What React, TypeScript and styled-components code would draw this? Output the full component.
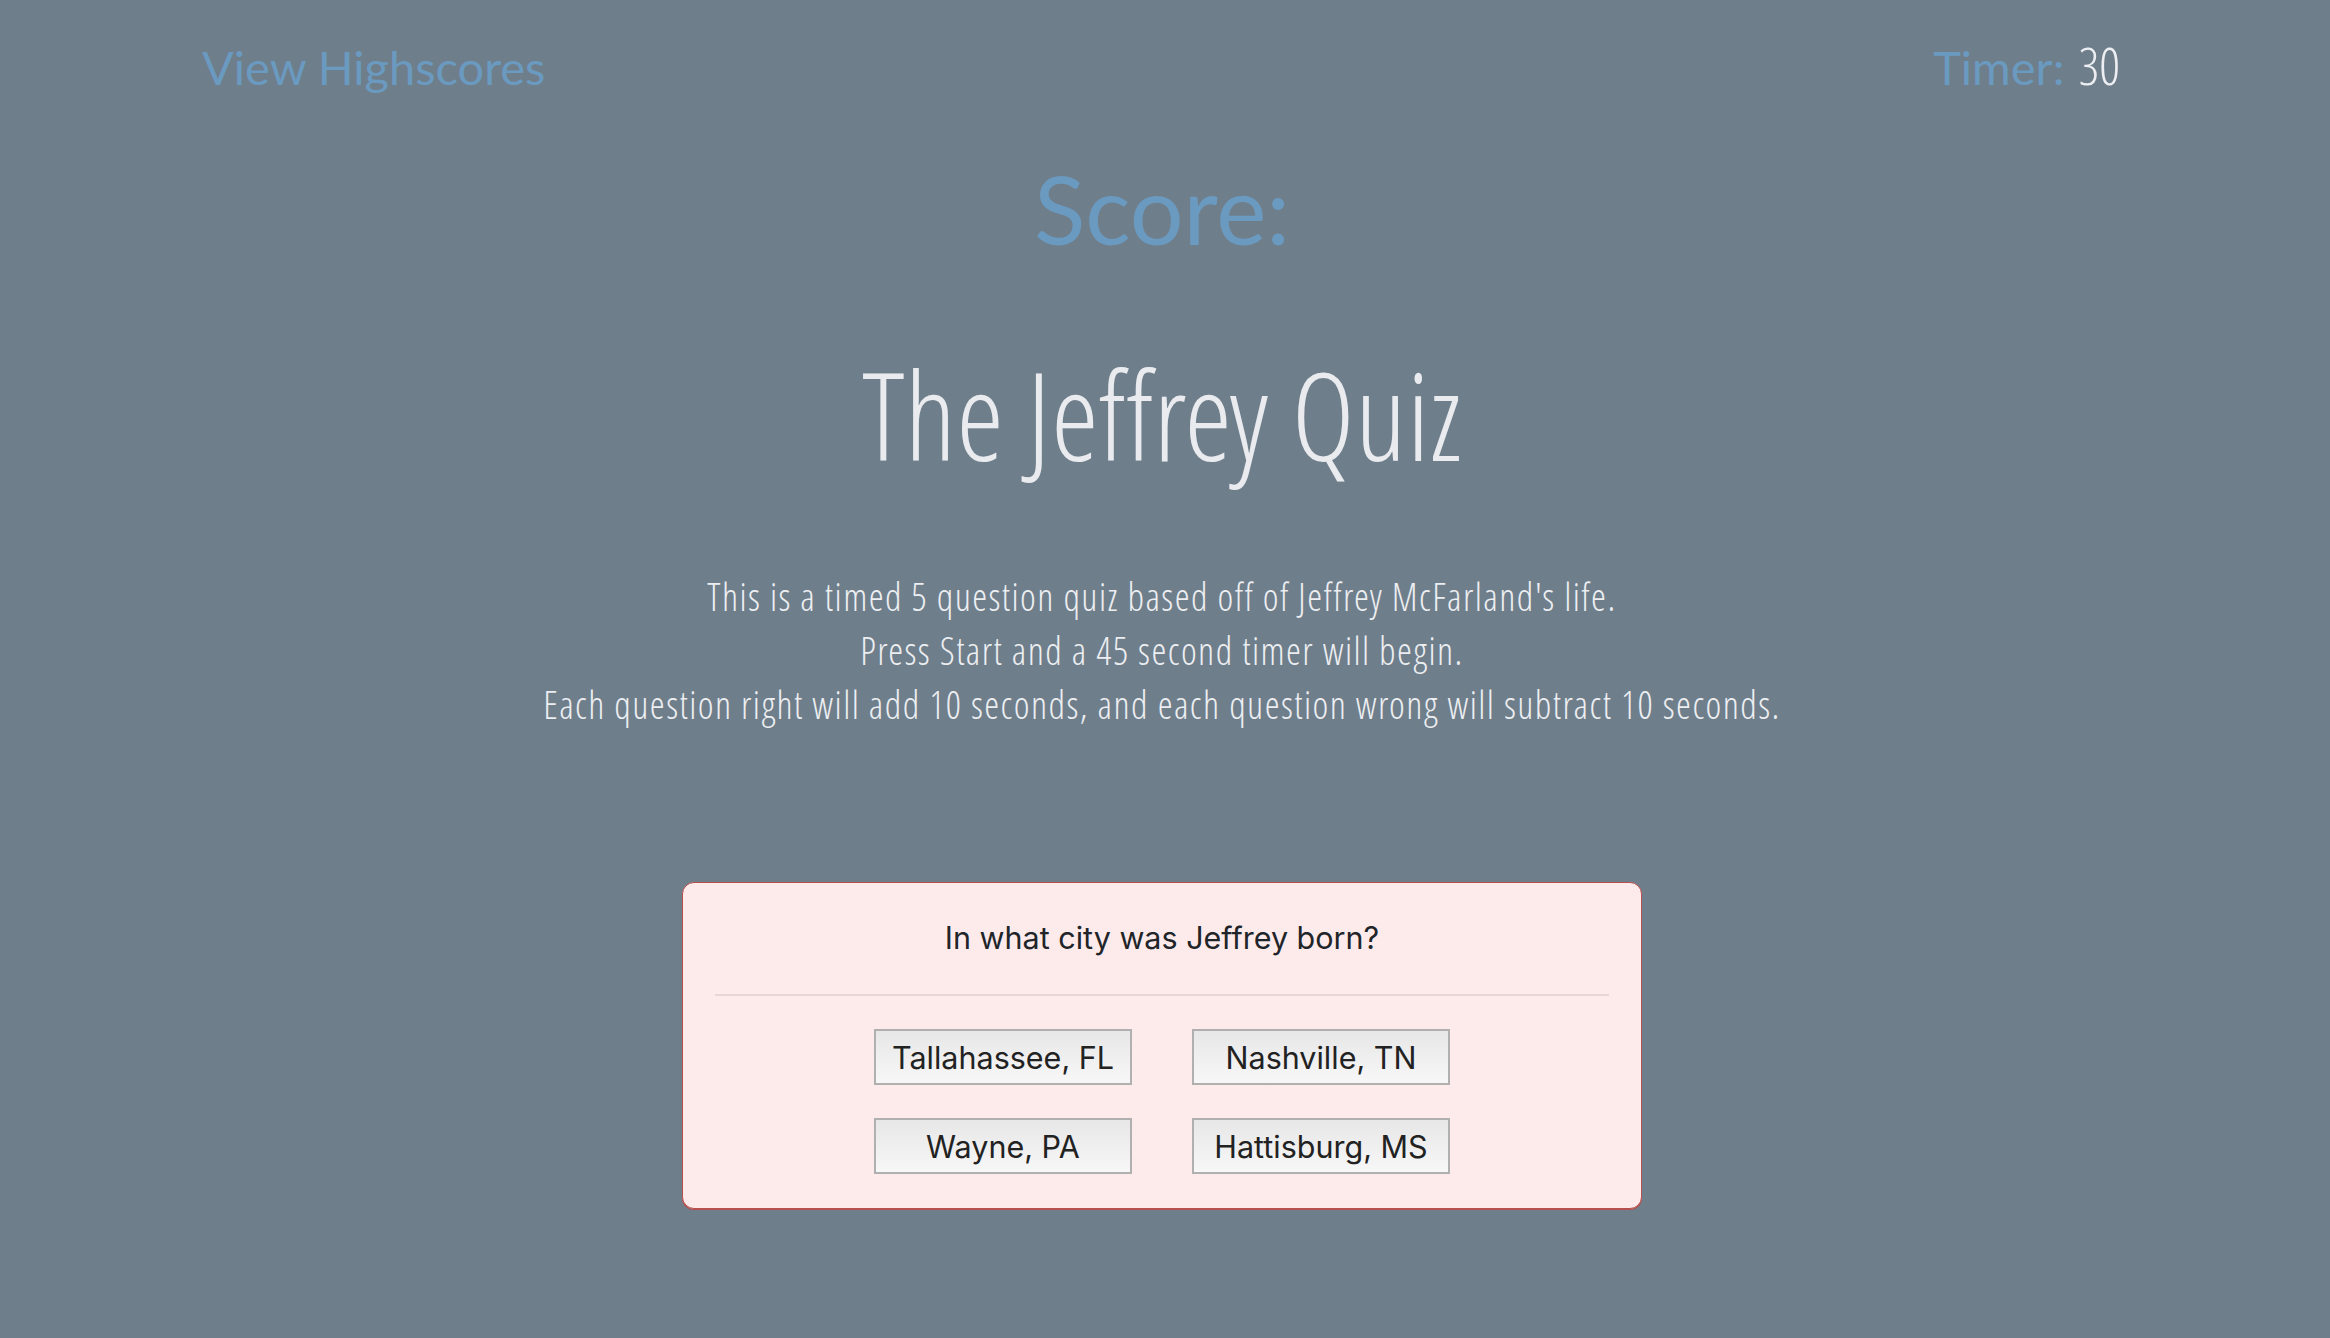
import React from "react";
import styled, { createGlobalStyle } from "styled-components";

const GlobalStyle = createGlobalStyle`
  html, body {
    margin: 0;
    padding: 0;
    background: #6f7e8b;
  }
  * { box-sizing: border-box; }
`;

const condensedStack = `"Open Sans Condensed Light", "Open Sans", sans-serif`;

const Page = styled.div`
  min-height: 100vh;
  background: #6f7e8b;
  display: flex;
  flex-direction: column;
  align-items: center;
  padding-right: 6px;
`;

const Header = styled.header`
  width: 100%;
  display: flex;
  justify-content: space-between;
  align-items: baseline;
  padding: 34px 204px 0 202px;
`;

const HeaderLink = styled.a`
  font-family: Lato, "Noto Sans", sans-serif;
  font-size: 47px;
  line-height: 1.2;
  color: #6b9ac0;
  text-decoration: none;
  cursor: pointer;
`;

const TimerBox = styled.div`
  display: flex;
  align-items: baseline;
  gap: 14px;
`;

const TimerLabel = styled.span`
  font-family: Lato, "Noto Sans", sans-serif;
  font-size: 47px;
  line-height: 1.2;
  color: #6b9ac0;
`;

const TimerValue = styled.span`
  font-family: ${condensedStack};
  font-stretch: 75%;
  font-weight: 300;
  font-size: 52px;
  line-height: 1.2;
  color: #eceef1;
`;

const Score = styled.h2`
  margin: 55px 0 0;
  font-family: Lato, "Noto Sans", sans-serif;
  font-weight: 400;
  font-size: 95px;
  line-height: 1.2;
  color: #6b9ac0;
`;

const Title = styled.h1`
  margin: 76px 0 0;
  font-family: ${condensedStack};
  font-stretch: 75%;
  font-weight: 300;
  font-size: 122px;
  line-height: 1.2;
  color: #e9ebef;
`;

const Intro = styled.p`
  margin: 81px 0 0;
  font-family: ${condensedStack};
  font-stretch: 75%;
  font-weight: 300;
  font-size: 38px;
  line-height: 54px;
  letter-spacing: 1.4px;
  text-align: center;
  color: #eceef1;
`;

const Card = styled.section`
  margin-top: 151px;
  width: 960px;
  background: #fdebeb;
  border: 1px solid #b5504e;
  box-shadow: 0 1px 0 #b5504e;
  border-radius: 12px;
  padding: 37px 32px 34px;
  display: flex;
  flex-direction: column;
  align-items: center;
`;

const Question = styled.div`
  font-family: Inter, "Noto Sans", sans-serif;
  font-size: 30.5px;
  line-height: 1.2;
  color: #212529;
`;

const Divider = styled.hr`
  width: 100%;
  margin: 38px 0 33px;
  border: none;
  border-top: 2px solid #e6d6d6;
`;

const Answers = styled.div`
  display: grid;
  grid-template-columns: 258px 258px;
  column-gap: 60px;
  row-gap: 33px;
`;

const Answer = styled.button`
  height: 56px;
  border: 2px solid #b0b0b0;
  border-radius: 0;
  background: linear-gradient(#e7e7e7, #f7f7f7);
  font-family: Inter, "Noto Sans", sans-serif;
  font-size: 30.5px;
  color: #222;
  padding: 0;
  cursor: pointer;
`;

const answers = ["Tallahassee, FL", "Nashville, TN", "Wayne, PA", "Hattisburg, MS"];

export default function App() {
  return (
    <>
      <GlobalStyle />
      <Page>
        <Header>
          <HeaderLink>View Highscores</HeaderLink>
          <TimerBox>
            <TimerLabel>Timer:</TimerLabel>
            <TimerValue>30</TimerValue>
          </TimerBox>
        </Header>
        <Score>Score:</Score>
        <Title>The Jeffrey Quiz</Title>
        <Intro>
          This is a timed 5 question quiz based off of Jeffrey McFarland's life.
          <br />
          Press Start and a 45 second timer will begin.
          <br />
          Each question right will add 10 seconds, and each question wrong will subtract 10 seconds.
        </Intro>
        <Card>
          <Question>In what city was Jeffrey born?</Question>
          <Divider />
          <Answers>
            {answers.map((a) => (
              <Answer key={a}>{a}</Answer>
            ))}
          </Answers>
        </Card>
      </Page>
    </>
  );
}
